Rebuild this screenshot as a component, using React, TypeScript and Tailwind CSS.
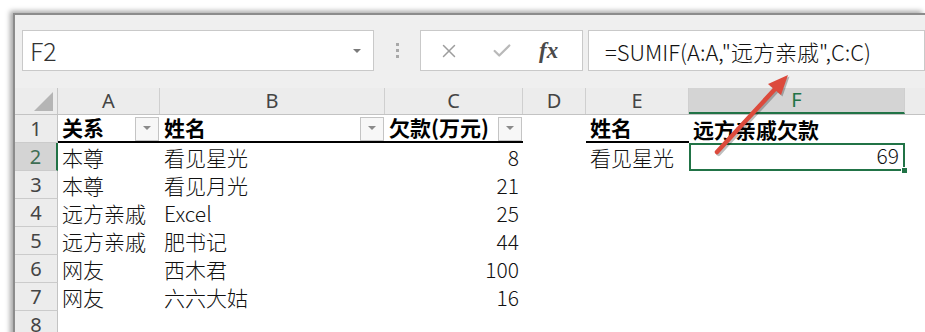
import { X, Check } from 'lucide-react';

const COLS = [
  { key: 'A', w: 'w-[102px]' },
  { key: 'B', w: 'w-[225px]' },
  { key: 'C', w: 'w-[138px]' },
  { key: 'D', w: 'w-[63px]' },
  { key: 'E', w: 'w-[103px]' },
  { key: 'F', w: 'w-[216px]' },
];

const ROWS: string[][] = [
  ['关系', '姓名', '欠款(万元)', '', '姓名', '远方亲戚欠款'],
  ['本尊', '看见星光', '8', '', '看见星光', '69'],
  ['本尊', '看见月光', '21', '', '', ''],
  ['远方亲戚', 'Excel', '25', '', '', ''],
  ['远方亲戚', '肥书记', '44', '', '', ''],
  ['网友', '西木君', '100', '', '', ''],
  ['网友', '六六大姑', '16', '', '', ''],
  ['', '', '', '', '', ''],
];

function FilterButton() {
  return (
    <div className="absolute right-[1px] top-[2px] w-[24px] h-[24px] border border-[#c4c4c4] bg-[#f7f7f7] flex justify-center pt-[8px]">
      <div className="w-0 h-0 border-l-[4px] border-r-[4px] border-t-[4px] border-l-transparent border-r-transparent border-t-[#8a8a8a]" />
    </div>
  );
}

function Cell({ row, col, value }: { row: number; col: number; value: string }) {
  const header = row === 0;
  const numeric = /^\d+$/.test(value);
  const underline = header && (col <= 2 || col === 4);
  const selected = row === 1 && col === 5;
  return (
    <div
      className={
        'relative shrink-0 h-[28px] flex items-end pb-[1px] text-[21px] leading-[26px] ' +
        COLS[col].w +
        (numeric ? ' justify-end pr-[4px]' : ' pl-[4px]') +
        (header ? ' font-bold text-black' : ' font-light text-[#111]') +
        (underline ? ' border-b-2 border-black' : '') +
        (selected ? ' border-2 border-[#217346] pr-[3px]' : '')
      }
    >
      <span className="whitespace-nowrap">{value}</span>
      {header && col <= 2 && <FilterButton />}
      {selected && <div className="absolute -right-[5px] -bottom-[5px] w-[7px] h-[7px] bg-[#217346] border border-white" />}
    </div>
  );
}

export default function App() {
  return (
    <div className="relative w-[925px] h-[332px] overflow-hidden bg-white pl-[13px] pt-[13px] font-['Noto_Sans_CJK_SC',sans-serif]">
      <div className="h-[340px] border-t-2 border-l-2 border-[#8c8c8c] shadow-[-3px_-2px_5px_rgba(0,0,0,0.35)] bg-white">
        {/* formula bar */}
        <div className="h-[73px] bg-[#efefef] flex items-start pt-[15px] pl-[7px]">
          <div className="w-[352px] h-[41px] bg-white border border-[#c9c9c9] flex items-center justify-between pl-[7px] pr-[12px]">
            <span className="text-[25px] text-[#333] leading-none font-light">F2</span>
            <div className="w-0 h-0 border-l-[4px] border-r-[4px] border-t-[4px] border-l-transparent border-r-transparent border-t-[#7a7a7a]" />
          </div>
          <div className="w-[46px] h-[41px] flex flex-col items-center justify-center gap-[3px]">
            <div className="w-[3px] h-[3px] bg-[#a8a8a8]" />
            <div className="w-[3px] h-[3px] bg-[#a8a8a8]" />
            <div className="w-[3px] h-[3px] bg-[#a8a8a8]" />
          </div>
          <div className="w-[163px] h-[41px] bg-white border border-[#c9c9c9] flex items-center pl-[17px]">
            <X size={22} strokeWidth={1.6} className="text-[#9d9d9d]" />
            <Check size={22} strokeWidth={2.4} className="text-[#b9b9b9] ml-[31px]" />
            <span className="ml-[26px] text-[23px] italic font-semibold font-['Liberation_Serif',serif] text-[#4a4a4a] leading-none">fx</span>
          </div>
          <div className="flex-1 ml-[5px] h-[41px] bg-white border border-[#c9c9c9] flex items-center pl-[16px]">
            <span className="text-[22px] font-light text-[#111] whitespace-nowrap leading-none">=SUMIF(A:A,"远方亲戚",C:C)</span>
          </div>
        </div>

        {/* column headers */}
        <div className="flex h-[27px] bg-[#ececec] border-b border-[#c3c3c3] font-['Noto_Sans',sans-serif] text-[20px] text-[#444]">
          <div className="w-[43px] shrink-0 border-r border-[#c6c6c6] flex items-end justify-end pr-[4px] pb-[3px]">
            <div className="w-0 h-0 border-l-[19px] border-b-[19px] border-l-transparent border-b-[#b5b5b5]" />
          </div>
          {COLS.map((c) => (
            <div
              key={c.key}
              className={
                'shrink-0 flex items-center justify-center leading-none border-r border-[#cfcfcf] ' +
                c.w +
                (c.key === 'F' ? ' bg-[#d4d4d4] text-[#217346] border-b-2 border-b-[#217346]' : '')
              }
            >
              {c.key}
            </div>
          ))}
          <div className="flex-1" />
        </div>

        {/* rows */}
        {ROWS.map((r, i) => (
          <div key={i} className="flex">
            <div
              className={
                'w-[43px] shrink-0 h-[28px] flex items-center justify-center border-b border-[#cbcbcb] font-["Noto_Sans",sans-serif] text-[20px] leading-none ' +
                (i === 1 ? 'bg-[#d4d4d4] text-[#3e6e53] border-r-2 border-r-[#217346]' : 'bg-[#ececec] text-[#444] border-r border-r-[#c3c3c3]')
              }
            >
              {i + 1}
            </div>
            {r.map((v, j) => (
              <Cell key={j} row={i} col={j} value={v} />
            ))}
          </div>
        ))}
      </div>

      {/* red arrow annotation */}
      <svg className="absolute left-0 top-0 pointer-events-none" width="925" height="332" viewBox="0 0 925 332">
        <g transform="translate(1.5,1.5)" opacity="0.25">
          <line x1="717" y1="152" x2="775" y2="89" stroke="#000" strokeWidth="5" strokeLinecap="round" />
          <polygon points="788,75 781,95 768,84" fill="#000" />
        </g>
        <line x1="717" y1="152" x2="775" y2="89" stroke="#dc4a3c" strokeWidth="4.5" strokeLinecap="round" />
        <polygon points="788,75 781,95 768,84" fill="#dc4a3c" />
      </svg>
    </div>
  );
}
